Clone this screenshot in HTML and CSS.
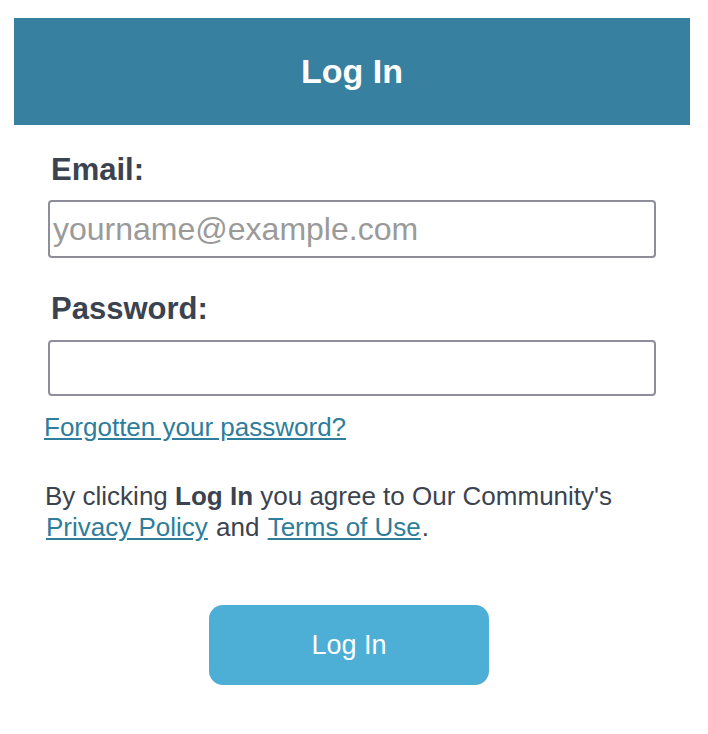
FILE: index.html
```html
<!doctype html>
<html lang="en">
<head>
    <meta charset="UTF-8">
    <meta name="viewport" content="width=device-width, initial-scale=1.0">
    <title>Log In</title>
    <link rel="stylesheet" href="styles.css">
</head>
<body>
<div class="page">
    <div class="header">
        <h1>Log In</h1>
    </div>

    <form class="login-form" onsubmit="return false">
        <label for="email" class="field-label email-label">Email:</label>
        <input type="text" id="email" name="email" class="field-input email-input" placeholder="yourname@example.com">

        <label for="password" class="field-label password-label">Password:</label>
        <input type="password" id="password" name="password" class="field-input">

        <a href="#" class="forgot-link">Forgotten your password?</a>

        <p class="terms">
            By clicking <strong>Log In</strong> you agree to Our Community's
            <a href="#" class="terms-link">Privacy Policy</a> and <a href="#" class="terms-link">Terms of Use</a>.
        </p>

        <button type="submit" class="login-btn">Log In</button>
    </form>
</div>
</body>
</html>
```

FILE: styles.css
```css
body {
    margin: 0;
    background-color: #fff;
    font-family: "Liberation Sans", Arial, sans-serif;
    color: #3b4350;
}

.page {
    width: 676px;
    padding: 18px 18px 0 14px;
}

/* Top bar */
.header {
    height: 107px;
    background-color: #38809f;
    display: flex;
    align-items: center;
    justify-content: center;
}

.header h1 {
    margin: 0;
    color: #fff;
    font-size: 34px;
    font-weight: bold;
}

/* Form */
.login-form {
    display: flex;
    flex-direction: column;
    padding: 0 34px;
}

.field-label {
    display: block;
    padding-left: 3px;
    font-size: 31px;
    font-weight: bold;
    line-height: 36px;
}

.email-label {
    margin: 27px 0 12px;
}

.password-label {
    margin: 33px 0 13px;
}

.field-input {
    box-sizing: border-box;
    width: 100%;
    height: 56px;
    margin: 0;
    padding: 0 3px;
    border: 2px solid #8e8e9a;
    border-radius: 4px;
    font-family: "Liberation Sans", Arial, sans-serif;
    font-size: 32px;
    color: #3b4350;
    background-color: #fff;
}

.email-input {
    height: 58px;
}

.field-input::placeholder {
    color: #9a9a9a;
}

.forgot-link {
    align-self: flex-start;
    margin: 16px 0 0 -4px;
    font-size: 26px;
    line-height: 30px;
    color: #2e7d9b;
}

.terms {
    margin: 39px 0 0 -3px;
    font-size: 26px;
    line-height: 31px;
}

.terms-link {
    color: #2e7d9b;
    padding: 0 1px;
}

.login-btn {
    align-self: center;
    width: 280px;
    height: 80px;
    margin: 62px 0 0 -6px;
    border: none;
    border-radius: 14px;
    background-color: #4daed6;
    color: #fff;
    font-family: "Liberation Sans", Arial, sans-serif;
    font-size: 27px;
    cursor: pointer;
}
```
